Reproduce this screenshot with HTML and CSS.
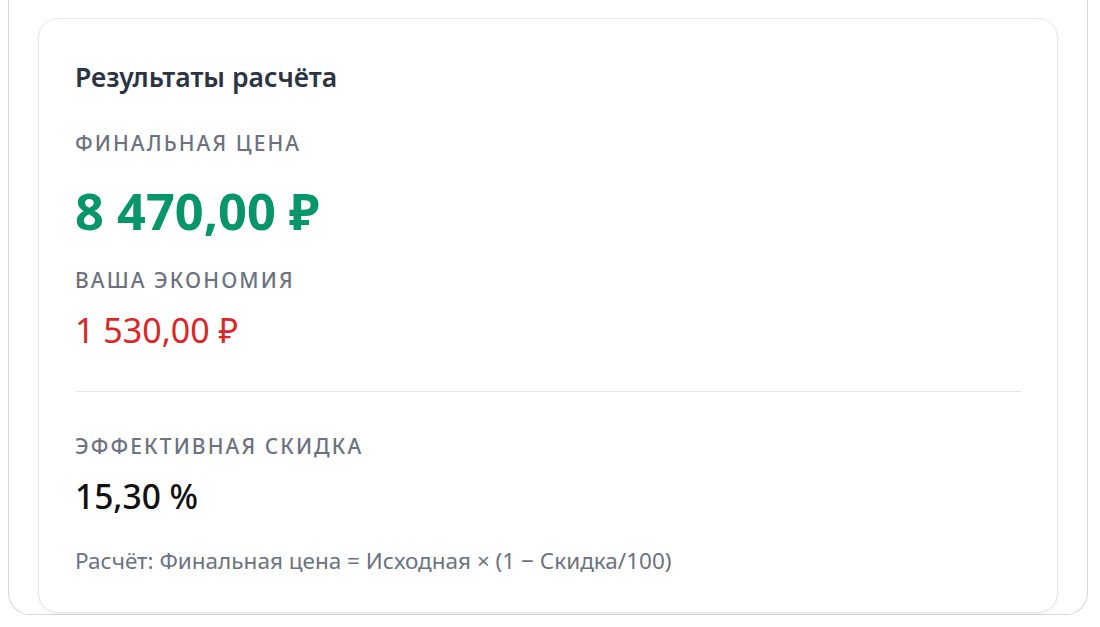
FILE: index.html
```html
<!DOCTYPE html>
<html lang="ru">
<head>
<meta charset="utf-8">
<link rel="stylesheet" href="styles.css">
</head>
<body>
<div class="outer">
  <section class="card">
    <h2 class="title">Результаты расчёта</h2>
    <div class="label">Финальная цена</div>
    <div class="price">8 470,00 ₽</div>
    <div class="label">Ваша экономия</div>
    <div class="savings">1 530,00 ₽</div>
    <hr class="divider">
    <div class="label">Эффективная скидка</div>
    <div class="pct">15,30 %</div>
    <p class="note">Расчёт: Финальная цена = Исходная × (1 − Скидка/100)</p>
  </section>
</div>
</body>
</html>
```
FILE: styles.css
```css
html, body {
  margin: 0;
  padding: 0;
  background: #ffffff;
}
body {
  font-family: "Noto Sans", "Open Sans", sans-serif;
  padding: 0 12px 0 8px;
}
.outer {
  border: 1px solid #d6d6d6;
  border-top: none;
  border-radius: 0 0 22px 22px;
  padding: 18px 29px 1px 29px;
}
.card {
  border: 1px solid #e6e7ea;
  border-radius: 20px;
  padding: 40px 36px 36px 36px;
  box-shadow: 0 1px 3px rgba(0, 0, 0, 0.06);
  background: #fff;
}
.title {
  margin: 0 0 34px 0;
  font-size: 26.5px;
  line-height: 36px;
  font-weight: 600;
  color: #2b3442;
}
.label {
  font-size: 21px;
  line-height: 28px;
  font-weight: 550;
  letter-spacing: 2.1px;
  text-transform: uppercase;
  color: #6b7280;
}
.price {
  font-size: 50.5px;
  line-height: 64px;
  font-weight: 700;
  color: #07956a;
  margin: 22px 0 23px 0;
}
.savings {
  font-size: 34px;
  line-height: 46px;
  color: #dc2626;
  margin: 13px 0 0 0;
}
.divider {
  border: none;
  border-top: 1px solid #e5e7eb;
  margin: 38px -1px 40px 0;
}
.pct {
  font-size: 33.5px;
  line-height: 46px;
  font-weight: 500;
  color: #111111;
  margin: 13px 0 0 0;
}
.note {
  margin: 27px 0 0 0;
  font-size: 22.5px;
  line-height: 30px;
  color: #6b7280;
}
```
